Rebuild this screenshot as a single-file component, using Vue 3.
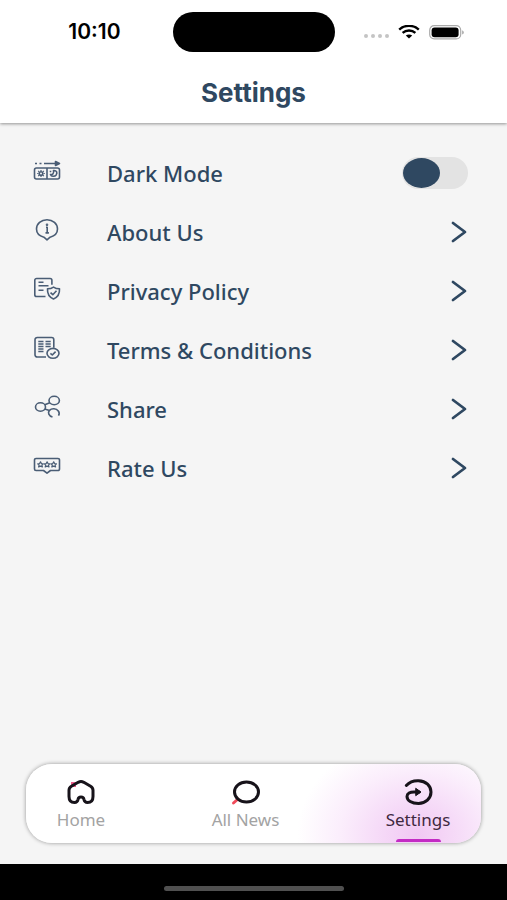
<script setup>
import { ref } from "vue";

const darkMode = ref(false);
const activeTab = ref("settings");

const links = [
  { id: "about", label: "About Us" },
  { id: "privacy", label: "Privacy Policy" },
  { id: "terms", label: "Terms & Conditions" },
  { id: "share", label: "Share" },
  { id: "rate", label: "Rate Us" },
];

const tabs = [
  { id: "home", label: "Home" },
  { id: "news", label: "All News" },
  { id: "settings", label: "Settings" },
];
</script>

<template>
  <div class="screen">
    <header class="topbar">
      <div class="status">
        <span class="time">10:10</span>
        <div class="island"></div>
        <div class="indicators">
          <svg class="dots" width="26" height="6" viewBox="0 0 26 6">
            <circle cx="3" cy="3" r="2" />
            <circle cx="10" cy="3" r="2" />
            <circle cx="17" cy="3" r="2" />
            <circle cx="24" cy="3" r="2" />
          </svg>
          <svg class="wifi" width="22" height="14" viewBox="0 0 22 14">
            <path d="M1.2 4.6C6.6-.4 15.4-.4 20.8 4.6" />
            <path d="M4.6 7.9c3.6-3.2 9.2-3.2 12.8 0" />
            <path class="solid" d="M7.8 10.6c1.8-1.6 4.6-1.6 6.4 0L11 13.6z" />
          </svg>
          <svg width="36" height="15" viewBox="0 0 36 15">
            <rect x="0.7" y="0.7" width="31" height="13.2" rx="4.5" fill="none" stroke="#aaa" stroke-width="1.2" />
            <rect x="2.6" y="2.4" width="27" height="9.8" rx="3" fill="#000" />
            <path d="M33.4 5.2c1.6.8 1.6 3.6 0 4.4z" fill="#888" />
          </svg>
        </div>
      </div>
      <h1>Settings</h1>
    </header>

    <main class="list">
      <label class="row">
        <svg class="icon" width="28" height="28" viewBox="0 0 28 28">
          <path d="M2 4.500h2M6.500 4.500h2M11 4.500h14" />
          <path class="solid" d="M22.500 2.500l4 2-4 2z" />
          <rect x="1.500" y="9" width="25" height="11" rx="2" />
          <path d="M14 9v11" />
          <circle cx="8" cy="14.500" r="1.800" />
          <path class="thin" d="M8 11v1M8 17v1M4.200 14.500h1.200M10.600 14.500h1.200M5.200 11.900l.9.8M9.900 16.300l.9.8M10.800 11.900l-.9.8M6.100 16.300l-.9.8" />
          <path d="M20.500 11.500c3-.4 4.200 2.200 2.700 4.400-1.500 2-5 1.800-5.700-.4 2 .5 3.700-1.300 3-4z" />
          <path class="thin" d="M17.500 11.700v1.500M16.700 12.400h1.600" />
        </svg>
        <span class="label">Dark Mode</span>
        <input v-model="darkMode" class="switch" type="checkbox" role="switch" />
      </label>

      <button v-for="link in links" :key="link.id" class="row" type="button">
        <svg class="icon" width="28" height="28" viewBox="0 0 28 28">
          <g v-if="link.id === 'about'">
            <path d="M10.900 19.200C6.600 18 3.500 14.900 3.500 11 3.500 5.900 8.100 1.700 14 1.700S24.500 5.900 24.500 11c0 3.900-3.100 7-7.400 8.200L14 21.800z" />
            <path d="M13 9.300h1.200v5.400M12.500 14.900h3.400" />
            <circle class="solid" cx="14" cy="6.700" r="0.500" />
          </g>
          <g v-else-if="link.id === 'privacy'">
            <path d="M12.500 19.500H3.600A1.800 1.800 0 0 1 1.800 17.700V3.300A1.800 1.800 0 0 1 3.600 1.500h13.500a1.800 1.800 0 0 1 1.800 1.800v4.400" />
            <path d="M5.500 5.300h5M5.500 8.700h10M5.500 13.200h5" />
            <path d="M20.500 10.100c1.900 1.300 3.800 1.700 6 1.700.3 4.900-1.700 8.400-6 10.200-4.300-1.800-6.300-5.300-6-10.200 2.200 0 4.100-.4 6-1.700z" />
            <path d="M17.500 15.600l2.300 2.100 3.700-3.900" />
          </g>
          <g v-else-if="link.id === 'terms'">
            <path d="M13 21H4.200A2.200 2.200 0 0 1 2 18.800V3.700A2.200 2.200 0 0 1 4.200 1.500h14.400a2.200 2.200 0 0 1 2.200 2.200v8" />
            <path d="M5.300 5.500h5.200M5.300 8h5.200M5.300 10.500h5.200M5.300 13h5.200M5.300 15.500h5.200M12.500 5.500h5.200M12.500 8h5.200M12.500 10.500h5.200" />
            <ellipse cx="20" cy="17.300" rx="6" ry="4.900" />
            <path d="M17.400 17.300l1.900 1.700 3.300-3.400" />
          </g>
          <g v-else-if="link.id === 'share'">
            <ellipse cx="7.500" cy="12" rx="5" ry="4.200" />
            <ellipse cx="21.200" cy="5.500" rx="5.200" ry="4.200" />
            <path d="M11.800 9.700l5-2M11.700 14.100l4.800 1.400M19.500 21.900c-3.800-1-5-4.300-3-6.500 2.300-2.400 6.800-2 8.800.5 1.200 1.600 1 3.400.2 4.700" />
          </g>
          <g v-else>
            <path d="M3 4.500h22a1.500 1.500 0 0 1 1.500 1.500V15a1.500 1.500 0 0 1-1.500 1.500h-7.500L14 19.200l-3.500-2.700H3A1.500 1.500 0 0 1 1.500 15V6A1.500 1.500 0 0 1 3 4.500z" />
            <path class="thin" v-for="x in [7.500, 14.100, 20.700]" :key="x" :d="`M${x} 7.800l.9 1.800 1.900.2-1.400 1.300.5 1.900-1.900-.9-1.900.9.500-1.900-1.400-1.300 1.900-.2z`" />
          </g>
        </svg>
        <span class="label">{{ link.label }}</span>
        <svg class="chevron" width="18" height="24" viewBox="0 0 18 24">
          <path d="M3 3l12 9-12 9" />
        </svg>
      </button>
    </main>

    <nav class="tabs">
      <button
        v-for="tab in tabs"
        :key="tab.id"
        type="button"
        class="tab"
        :class="[tab.id, { active: activeTab === tab.id }]"
        @click="activeTab = tab.id"
      >
        <svg width="32" height="28" viewBox="0 0 32 28">
          <g v-if="tab.id === 'home'">
            <path class="pink" d="M6 4h5v5H6z" />
            <path d="M13.200 4.300q2.800-1.400 5.600 0l6.800 4q2.400 1.400 2.400 4V18.500q0 6-5.500 6-3 0-3.600-3.200-.3-2.300-2.900-2.300t-2.900 2.300Q12.500 24.500 9.500 24.500 4 24.500 4 18.500v-6.200q0-2.600 2.400-4z" />
          </g>
          <g v-else-if="tab.id === 'news'">
            <path class="red" d="M3.500 25L8 21" />
            <ellipse cx="16.500" cy="14" rx="12" ry="10" />
          </g>
          <g v-else>
            <path d="M4.300 7.500C7.500 4 12 2.500 16.500 2.700c7.500.4 12.500 5 12.500 11.400S23.600 25.500 16.500 25.500c-6.800 0-11.500-3-11.500-7 0-3.200 3.100-4.500 7-4.500h5" />
            <path class="head" d="M14 10.500l5 3.500-5 3.500z" />
          </g>
        </svg>
        <span>{{ tab.label }}</span>
      </button>
    </nav>

    <footer class="bottom">
      <div class="handle"></div>
    </footer>
  </div>
</template>

<style>
body {
  margin: 0;
}
</style>

<style scoped>
.screen {
  display: flex;
  flex-direction: column;
  min-height: 100vh;
  background-color: #f5f5f5;
  color: #2f4861;
  font-family: "Noto Sans", "Open Sans", sans-serif;
}

button {
  border: none;
  background: none;
  font-family: inherit;
  color: inherit;
  cursor: pointer;
}

.topbar {
  padding: 12px 0 14px;
  background-color: white;
  box-shadow: 0 1px 3px rgba(0, 0, 0, 0.4);
}

.status {
  display: grid;
  grid-template-columns: 1fr 162px 1fr;
  align-items: center;
}

.time {
  padding-right: 52px;
  color: black;
  font-family: Inter, sans-serif;
  font-size: 21px;
  font-weight: 600;
  line-height: 24px;
  text-align: right;
}

.island {
  height: 40px;
  border-radius: 20px;
  background-color: black;
}

.indicators {
  display: flex;
  align-items: center;
  gap: 9px;
  padding-left: 28px;
}

.dots {
  fill: #c4c4c4;
  margin-top: 8px;
}

.wifi {
  fill: none;
  stroke: black;
  stroke-width: 2.4;
}

.wifi .solid {
  fill: black;
  stroke: none;
}

h1 {
  margin: 25px 0 0;
  font-family: Inter, sans-serif;
  font-size: 26px;
  font-weight: 700;
  line-height: 32px;
  text-align: center;
}

.list {
  flex: 1;
  display: flex;
  flex-direction: column;
  padding: 20px 39px 20px 33px;
}

.row {
  display: flex;
  align-items: center;
  height: 59px;
  padding: 0;
  text-align: left;
}

.icon {
  fill: none;
  stroke: #4a5d75;
  stroke-width: 1.6;
  stroke-linejoin: round;
}

.icon .solid {
  fill: #4a5d75;
}

.icon .thin {
  stroke-width: 1.2;
}

.label {
  flex: 1;
  margin-left: 46px;
  font-size: 22px;
  font-weight: 500;
  line-height: 28px;
}

.switch {
  appearance: none;
  width: 66px;
  height: 32px;
  margin: 0;
  border-radius: 16px;
  background-color: #e3e3e3;
  cursor: pointer;
}

.switch::before {
  content: "";
  display: block;
  width: 37px;
  height: 30px;
  margin: 1px;
  border-radius: 50%;
  background-color: #2f4861;
}

.switch:checked::before {
  margin-left: 28px;
}

.chevron {
  fill: none;
  stroke: #2f4861;
  stroke-width: 2.8;
  stroke-linecap: round;
  stroke-linejoin: round;
}

.tabs {
  display: flex;
  justify-content: space-between;
  height: 79px;
  margin: 0 26px 21px;
  border-radius: 26px;
  background: radial-gradient(ellipse 120px 100px at 86% 90%, #f1c8f3 0%, #f6dcf8 35%, #fbeefc 65%, #fff 100%);
  box-shadow: 0 0 4px rgba(0, 0, 0, 0.4);
}

.tab {
  display: flex;
  flex-direction: column;
  align-items: center;
  width: 110px;
  padding: 14px 0 0;
  color: #a3a3a3;
  font-size: 17px;
  line-height: 20px;
}

.tab svg {
  fill: none;
  stroke: #17131a;
  stroke-width: 3;
  stroke-linecap: round;
  stroke-linejoin: round;
}

.tab span {
  margin-top: 4px;
}

.tab .pink {
  fill: #ee5c8c;
  stroke: none;
}

.tab .red {
  stroke: #f04b5a;
}

.tab .head {
  fill: #17131a;
  stroke-width: 1;
}

.tab.settings {
  width: 126px;
}

.tab.active {
  color: #40283f;
}

.tab.active::after {
  content: "";
  width: 45px;
  height: 3px;
  margin-top: 9px;
  border-radius: 3px 3px 0 0;
  background-color: #c32bc4;
}

.bottom {
  display: flex;
  justify-content: center;
  padding: 22px 0 9px;
  background-color: black;
}

.handle {
  width: 180px;
  height: 5px;
  border-radius: 3px;
  background-color: #505050;
}
</style>
